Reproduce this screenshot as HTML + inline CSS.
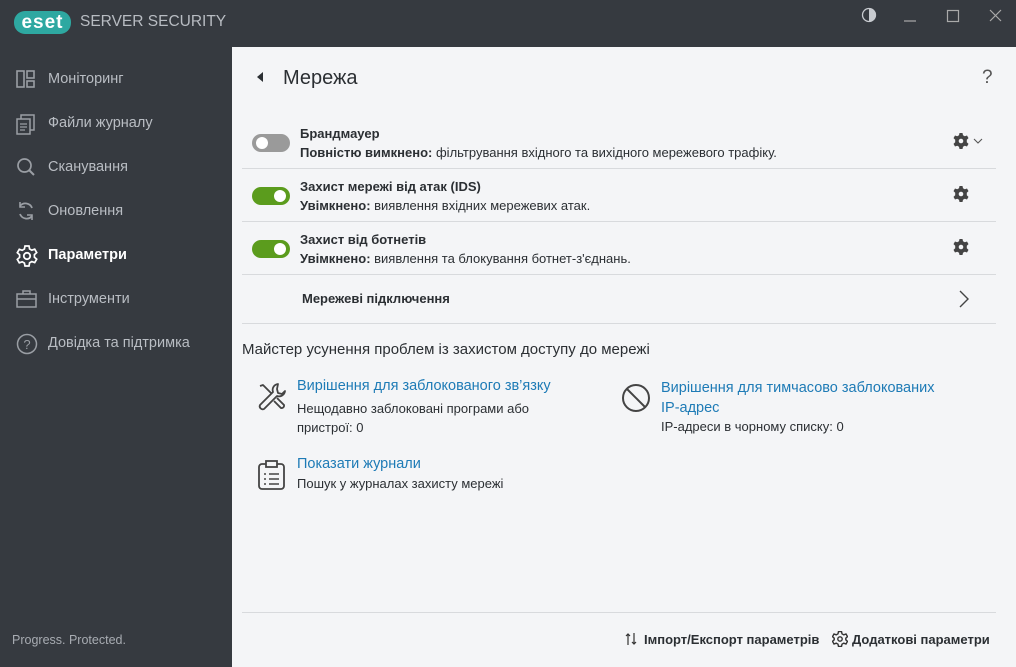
<!DOCTYPE html>
<html><head><meta charset="utf-8"><style>
*{margin:0;padding:0;box-sizing:border-box}
body{width:1016px;height:667px;overflow:hidden;background:#363a40;font-family:"Liberation Sans","Noto Sans CJK SC",sans-serif;position:relative}
.abs{position:absolute}
.logo{left:14px;top:11px;width:57px;height:23px;background:#2ea8a1;border-radius:11px;color:#fff;font-weight:bold;font-size:19px;line-height:23px;text-align:center;letter-spacing:1px}
.brand{left:80px;top:13px;color:#b8bcc2;font-size:15.5px}
.nav{left:16px;color:#b9bdc3;font-size:14.5px}
.nav span{position:absolute;left:32px;top:0;white-space:nowrap}
.nav svg{position:absolute;left:0;top:-2px}
.main{left:232px;top:47px;width:784px;height:620px;background:#f4f5f7}
.t{color:#2b2f33;font-size:13px}
.b{font-weight:bold}
.sep{left:10px;width:754px;height:1px;background:#d8dadd}
.tog{width:38px;height:18px;border-radius:9px}
.tog i{position:absolute;top:3px;width:12px;height:12px;border-radius:6px;background:#fff}
.link{color:#1e7bb6;font-size:14.5px}
</style></head><body>
<div class="abs logo">eset</div>
<div class="abs brand">SERVER SECURITY</div>
<svg class="abs" style="left:860px;top:7px" width="150" height="20" viewBox="0 0 150 20">
<circle cx="9" cy="8" r="6.5" fill="none" stroke="#c8cbd0" stroke-width="1.3"/><path d="M9 1.5a6.5 6.5 0 0 1 0 13z" fill="#c8cbd0"/>
<line x1="44" y1="14" x2="56" y2="14" stroke="#aaa" stroke-width="1.2"/>
<rect x="87.5" y="3.5" width="11" height="11" fill="none" stroke="#aaa" stroke-width="1.2"/>
<path d="M130 3l11 11M141 3l-11 11" stroke="#aaa" stroke-width="1.2"/>
</svg>

<div class="abs nav" style="top:71px"><svg width="20" height="20"><rect x="1" y="2" width="7" height="16" fill="none" stroke="#9a9ea4" stroke-width="1.6"/><rect x="11" y="2" width="7" height="7" fill="none" stroke="#9a9ea4" stroke-width="1.6"/><rect x="11" y="12" width="7" height="6" fill="none" stroke="#9a9ea4" stroke-width="1.6"/></svg><span>Моніторинг</span></div>
<div class="abs nav" style="top:115px"><svg width="20" height="22"><rect x="5" y="2" width="13" height="15" fill="none" stroke="#9a9ea4" stroke-width="1.5"/><rect x="1" y="6" width="13" height="15" fill="#363a40" stroke="#9a9ea4" stroke-width="1.5"/><path d="M4 11h7M4 14h7M4 17h5" stroke="#9a9ea4" stroke-width="1.3"/></svg><span>Файли журналу</span></div>
<div class="abs nav" style="top:159px"><svg width="20" height="20"><circle cx="8.5" cy="8.5" r="6.5" fill="none" stroke="#9a9ea4" stroke-width="1.7"/><path d="M13 13l5 5" stroke="#9a9ea4" stroke-width="2"/></svg><span>Сканування</span></div>
<div class="abs nav" style="top:203px"><svg width="20" height="20"><path d="M16 7A7 7 0 0 0 4 5M4 13a7 7 0 0 0 12 2" fill="none" stroke="#9a9ea4" stroke-width="1.8"/><path d="M4 1v5h5M16 19v-5h-5" fill="none" stroke="#9a9ea4" stroke-width="1.6"/></svg><span>Оновлення</span></div>
<div class="abs nav" style="top:247px;color:#fff;font-weight:bold"><svg width="22" height="22" viewBox="0 0 22 22"><path d="M9 1h4l.6 3 2.2 1.2 2.9-1 2 3.4-2.3 2v2.6l2.3 2-2 3.4-2.9-1-2.2 1.2L13 21H9l-.6-3-2.2-1.2-2.9 1-2-3.4 2.3-2V9.7l-2.3-2 2-3.4 2.9 1L8.4 4z" fill="none" stroke="#fff" stroke-width="1.7"/><circle cx="11" cy="11" r="3.2" fill="none" stroke="#fff" stroke-width="1.8"/></svg><span>Параметри</span></div>
<div class="abs nav" style="top:291px"><svg width="22" height="20"><rect x="1" y="5" width="19" height="13" fill="none" stroke="#9a9ea4" stroke-width="1.5"/><path d="M7 5V2h7v3M1 10h19" stroke="#9a9ea4" stroke-width="1.5" fill="none"/></svg><span>Інструменти</span></div>
<div class="abs nav" style="top:335px"><svg width="22" height="22"><circle cx="11" cy="11" r="9.5" fill="none" stroke="#9a9ea4" stroke-width="1.5"/><text x="11" y="16" font-size="13" fill="#9a9ea4" text-anchor="middle" font-family="Liberation Sans">?</text></svg><span>Довідка та підтримка</span></div>
<div class="abs" style="left:12px;top:633px;color:#a8acb2;font-size:12.5px">Progress. Protected.</div>

<div class="abs main">
<svg class="abs" style="left:24px;top:25px" width="8" height="10"><path d="M7 0L1 5l6 5z" fill="#2b2f33"/></svg>
<div class="abs" style="left:51px;top:20px;font-size:20px;color:#2b2f33">Мережа</div>
<div class="abs" style="left:750px;top:20px;font-size:19px;color:#555">?</div>

<div class="abs tog" style="left:20px;top:87px;background:#9a9a9a"><i style="left:4px"></i></div>
<div class="abs t b" style="left:68px;top:79px">Брандмауер</div>
<div class="abs t" style="left:68px;top:98px"><b>Повністю вимкнено:</b> фільтрування вхідного та вихідного мережевого трафіку.</div>
<div class="abs sep" style="top:121px"></div>
<div class="abs tog" style="left:20px;top:140px;background:#5b9c1d"><i style="right:4px"></i></div>
<div class="abs t b" style="left:68px;top:132px">Захист мережі від атак (IDS)</div>
<div class="abs t" style="left:68px;top:151px"><b>Увімкнено:</b> виявлення вхідних мережевих атак.</div>
<div class="abs sep" style="top:174px"></div>
<div class="abs tog" style="left:20px;top:193px;background:#5b9c1d"><i style="right:4px"></i></div>
<div class="abs t b" style="left:68px;top:185px">Захист від ботнетів</div>
<div class="abs t" style="left:68px;top:204px"><b>Увімкнено:</b> виявлення та блокування ботнет-з'єднань.</div>
<div class="abs sep" style="top:227px"></div>
<div class="abs t b" style="left:70px;top:244px">Мережеві підключення</div>
<svg class="abs" style="left:726px;top:242px" width="12" height="20"><path d="M2 2l8 8-8 8" fill="none" stroke="#444" stroke-width="1.4"/></svg>
<div class="abs sep" style="top:276px"></div>

<svg class="abs" style="left:721px;top:86px" width="34" height="16"><g transform="translate(8,8)"><path d="M-1.5-8h3l.5 2.3 1.8 1 2.2-.8 1.5 2.6-1.7 1.6v2.6l1.7 1.6-1.5 2.6-2.2-.8-1.8 1L1.5 8h-3L-2 5.7l-1.8-1-2.2.8-1.5-2.6 1.7-1.6v-2.6l-1.7-1.6 1.5-2.6 2.2.8 1.8-1z" fill="#444"/><circle r="2.3" fill="#f4f5f7"/></g><path d="M21 6l4 4 4-4" fill="none" stroke="#555" stroke-width="1.1"/></svg>
<svg class="abs" style="left:721px;top:139px" width="16" height="16"><g transform="translate(8,8)"><path d="M-1.5-8h3l.5 2.3 1.8 1 2.2-.8 1.5 2.6-1.7 1.6v2.6l1.7 1.6-1.5 2.6-2.2-.8-1.8 1L1.5 8h-3L-2 5.7l-1.8-1-2.2.8-1.5-2.6 1.7-1.6v-2.6l-1.7-1.6 1.5-2.6 2.2.8 1.8-1z" fill="#444"/><circle r="2.3" fill="#f4f5f7"/></g></svg>
<svg class="abs" style="left:721px;top:192px" width="16" height="16"><g transform="translate(8,8)"><path d="M-1.5-8h3l.5 2.3 1.8 1 2.2-.8 1.5 2.6-1.7 1.6v2.6l1.7 1.6-1.5 2.6-2.2-.8-1.8 1L1.5 8h-3L-2 5.7l-1.8-1-2.2.8-1.5-2.6 1.7-1.6v-2.6l-1.7-1.6 1.5-2.6 2.2.8 1.8-1z" fill="#444"/><circle r="2.3" fill="#f4f5f7"/></g></svg>

<div class="abs" style="left:10px;top:294px;font-size:15px;color:#2b2f33">Майстер усунення проблем із захистом доступу до мережі</div>

<svg class="abs" style="left:24px;top:335px" width="32" height="32" viewBox="0 0 32 32"><path d="M4 4l3-1 9 9M22 2a6 6 0 0 0-5 8L4 23a3 3 0 0 0 4 4l13-13a6 6 0 0 0 8-5l-3 3-4-1-1-4z" fill="none" stroke="#444" stroke-width="1.8" stroke-linejoin="round"/><path d="M18 19l7 7a2.5 2.5 0 0 0 3-3l-7-7" fill="none" stroke="#444" stroke-width="1.8"/></svg>
<div class="abs link" style="left:65px;top:331px">Вирішення для заблокованого зв’язку</div>
<div class="abs t" style="left:65px;top:352px;line-height:19px;width:280px">Нещодавно заблоковані програми або<br>пристрої: 0</div>

<svg class="abs" style="left:388px;top:335px" width="32" height="32"><circle cx="16" cy="16" r="13" fill="none" stroke="#444" stroke-width="2"/><path d="M7 7l18 18" stroke="#444" stroke-width="2"/></svg>
<div class="abs link" style="left:429px;top:331px;line-height:20px">Вирішення для тимчасово заблокованих<br>IP-адрес</div>
<div class="abs t" style="left:429px;top:372px">IP-адреси в чорному списку: 0</div>

<svg class="abs" style="left:25px;top:412px" width="30" height="32"><rect x="2" y="5" width="25" height="25" rx="3" fill="none" stroke="#444" stroke-width="1.8"/><rect x="9" y="2" width="11" height="6" fill="#f4f5f7" stroke="#444" stroke-width="1.8"/><path d="M7 15h2M12 15h10M7 20h2M12 20h10M7 25h2M12 25h10" stroke="#444" stroke-width="1.6"/></svg>
<div class="abs link" style="left:65px;top:409px">Показати журнали</div>
<div class="abs t" style="left:65px;top:429px">Пошук у журналах захисту мережі</div>

<div class="abs sep" style="top:565px;left:10px"></div>
<svg class="abs" style="left:393px;top:585px" width="12" height="14"><path d="M3 13V2M1 4l2-2 2 2M9 1v11M7 10l2 2 2-2" fill="none" stroke="#333" stroke-width="1.2"/></svg>
<div class="abs t b" style="left:412px;top:585px">Імпорт/Експорт параметрів</div>
<svg class="abs" style="left:600px;top:584px" width="16" height="16"><g transform="translate(8,8)"><path d="M-1.5-7.5h3l.5 2.3 1.8 1 2.2-.8 1.5 2.6-1.7 1.6v1.6l1.7 1.6-1.5 2.6-2.2-.8-1.8 1L1.5 7.5h-3L-2 5.2l-1.8-1-2.2.8-1.5-2.6 1.7-1.6v-1.6l-1.7-1.6 1.5-2.6 2.2.8 1.8-1z" fill="none" stroke="#333" stroke-width="1.4"/><circle r="2.2" fill="none" stroke="#333" stroke-width="1.4"/></g></svg>
<div class="abs t b" style="left:620px;top:585px">Додаткові параметри</div>
</div>
</body></html>
